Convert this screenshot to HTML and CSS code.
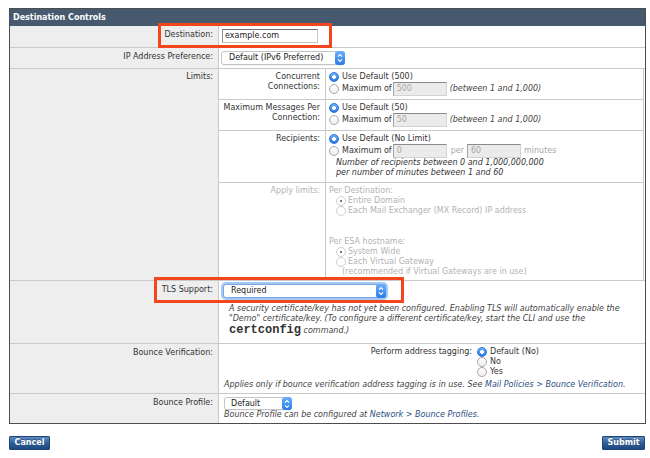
FILE: index.html
```html
<!DOCTYPE html>
<html>
<head>
<meta charset="utf-8">
<title>Destination Controls</title>
<link rel="stylesheet" href="styles.css">
</head>
<body>
<div class="page">
  <div class="panel">
    <div class="panel-head">Destination Controls</div>
    <div class="form">
      <div class="lbl">Destination:</div>
      <div class="val"><span class="textbox">example.com</span></div>

      <div class="lbl">IP Address Preference:</div>
      <div class="val">
        <div class="select sel-ip">Default (IPv6 Preferred)<span class="stepper"><svg width="6" height="10" viewBox="0 0 6 10"><path d="M1 3.6 3 1.6 5 3.6M1 6.4 3 8.4 5 6.4" fill="none" stroke="#fff" stroke-width="1.1"/></svg></span></div>
      </div>

      <div class="lbl top3">Limits:</div>
      <div class="val flush">
        <div class="limits">
          <div class="sublbl">Concurrent<br>Connections:</div>
          <div class="subval">
            <div class="opt"><span class="radio on"></span>Use Default (500)</div>
            <div class="opt tall"><span class="radio"></span>Maximum of<span class="num">500</span><em class="hint">(between 1 and 1,000)</em></div>
          </div>

          <div class="sublbl">Maximum Messages Per<br>Connection:</div>
          <div class="subval">
            <div class="opt"><span class="radio on"></span>Use Default (50)</div>
            <div class="opt tall"><span class="radio"></span>Maximum of<span class="num">50</span><em class="hint">(between 1 and 1,000)</em></div>
          </div>

          <div class="sublbl">Recipients:</div>
          <div class="subval">
            <div class="opt"><span class="radio on"></span>Use Default (No Limit)</div>
            <div class="opt tall"><span class="radio"></span>Maximum of<span class="num">0</span><span class="muted per">per</span><span class="num">60</span><span class="muted">minutes</span></div>
            <p class="rcpt-note">Number of recipients between 0 and 1,000,000,000<br>per number of minutes between 1 and 60</p>
          </div>

          <div class="sublbl last dis">Apply limits:</div>
          <div class="subval last dis">
            <div class="opt">Per Destination:</div>
            <div class="opt ind"><span class="radio dis-on"></span>Entire Domain</div>
            <div class="opt ind"><span class="radio dis-off"></span>Each Mail Exchanger (MX Record) IP address</div>
            <div class="opt group">Per ESA hostname:</div>
            <div class="opt ind"><span class="radio dis-on"></span>System Wide</div>
            <div class="opt ind"><span class="radio dis-off"></span>Each Virtual Gateway</div>
            <div class="opt ind2">(recommended if Virtual Gateways are in use)</div>
          </div>
        </div>
      </div>

      <div class="lbl">TLS Support:</div>
      <div class="val">
        <div class="select sel-tls">Required<span class="stepper"><svg width="6" height="10" viewBox="0 0 6 10"><path d="M1 3.6 3 1.6 5 3.6M1 6.4 3 8.4 5 6.4" fill="none" stroke="#fff" stroke-width="1.1"/></svg></span></div>
        <p class="tls-note">A security certificate/key has not yet been configured. Enabling TLS will automatically enable the<br>"Demo" certificate/key. (To configure a different certificate/key, start the CLI and use the<br><code class="cmd">certconfig</code> command.)</p>
      </div>

      <div class="lbl">Bounce Verification:</div>
      <div class="val">
        <div class="tagging">
          <div class="tag-lbl">Perform address tagging:</div>
          <div class="tag-opts">
            <div class="opt"><span class="radio on"></span>Default (No)</div>
            <div class="opt"><span class="radio"></span>No</div>
            <div class="opt"><span class="radio"></span>Yes</div>
          </div>
        </div>
        <p class="note bv-note">Applies only if bounce verification address tagging is in use. See <span class="link">Mail Policies &gt; Bounce Verification</span>.</p>
      </div>

      <div class="lbl last">Bounce Profile:</div>
      <div class="val last">
        <div class="select sel-bp">Default<span class="stepper"><svg width="6" height="10" viewBox="0 0 6 10"><path d="M1 3.6 3 1.6 5 3.6M1 6.4 3 8.4 5 6.4" fill="none" stroke="#fff" stroke-width="1.1"/></svg></span></div>
        <p class="note">Bounce Profile can be configured at <span class="link">Network &gt; Bounce Profiles</span>.</p>
      </div>
    </div>
  </div>

  <div class="actions">
    <button class="btn btn-cancel">Cancel</button>
    <button class="btn btn-submit">Submit</button>
  </div>

  <div class="hl hl-dest"></div>
  <div class="hl hl-tls"></div>
</div>
</body>
</html>
```

FILE: styles.css
```css
* { box-sizing: border-box; }
html, body { margin: 0; background: #fff; }
body {
  font-family: "DejaVu Sans", Verdana, sans-serif;
  font-size: 8px;
  line-height: 10px;
  color: #333;
}
p { margin: 0; }

.page {
  position: relative;
  width: 650px;
  height: 458px;
  padding: 8px 0 0 9px;
}

.panel {
  width: 637px;
  border: 1px solid #4d4d4d;
}
.panel-head {
  height: 17px;
  line-height: 17px;
  padding-left: 3px;
  background: #46596f;
  color: #fff;
  font-weight: bold;
}

.form {
  display: grid;
  grid-template-columns: 209px 1fr;
  grid-template-rows: 22px 21px 212px 63px 50px 29px;
}
.lbl {
  background: #eeeeee;
  border-right: 1px solid #c9c9c9;
  border-bottom: 1px solid #c9c9c9;
  text-align: right;
  padding: 4px 5px 0 0;
}
.lbl.top3 { padding-top: 3px; }
.val {
  border-bottom: 1px solid #c9c9c9;
  padding: 3px 3px 0 3px;
}
.val.flush { padding: 0; }
.lbl.last, .val.last { border-bottom: none; }

/* nested limits table */
.limits {
  display: grid;
  grid-template-columns: 107px 1fr;
  grid-template-rows: 31px 31px 52px 97px;
  height: 211px;
  margin-right: 1px;
  border-right: 1px solid #c9c9c9;
}
.sublbl {
  border-right: 1px solid #c9c9c9;
  border-bottom: 1px solid #c9c9c9;
  text-align: right;
  padding: 3px 5px 0 0;
}
.subval {
  border-bottom: 1px solid #c9c9c9;
  padding: 3px 0 0 3px;
}
.sublbl.last, .subval.last { border-bottom: none; }
.dis { color: #b3b3b3; }

.opt {
  display: flex;
  align-items: center;
  height: 10px;
  white-space: nowrap;
}
.opt.tall { height: 14px; }
.opt.ind { padding-left: 7px; }
.opt.ind .radio { margin-right: 2px; }
.opt.ind2 { padding-left: 13px; }
.opt.group { margin-top: 21px; }

.radio {
  flex: none;
  width: 10px;
  height: 10px;
  margin-right: 3px;
  border-radius: 50%;
  border: 1px solid #a8a8a8;
  background: linear-gradient(#ffffff, #ededed);
}
.radio.on {
  border-color: #2d74dc;
  background:
    radial-gradient(circle at 50% 50%, #fff 0 1.7px, rgba(255,255,255,0) 2.2px),
    linear-gradient(#6cb0fb, #2a78e6);
}
.radio.dis-off {
  border-color: #d0d0d0;
  background: #fff;
}
.radio.dis-on {
  border-color: #d0d0d0;
  background: radial-gradient(circle at 50% 50%, #7a7a7a 0 1px, rgba(255,255,255,0) 1.6px), #fff;
}

.num {
  flex: none;
  width: 54px;
  height: 14px;
  margin: 0 3px 0 1px;
  padding-left: 3px;
  line-height: 12px;
  border: 1px solid #d2d2d2;
  border-top-color: #8a8a8a;
  border-left-color: #a2a2a2;
  background: #ebebeb;
  color: #a8a8a8;
}
.hint { font-style: italic; color: #444; }
.muted { color: #a8a8a8; }
.muted.per { margin: 0 2px 0 1px; }

.rcpt-note {
  padding-left: 7px;
  font-style: italic;
  color: #333;
  white-space: nowrap;
}

/* inputs */
.textbox {
  display: block;
  width: 96px;
  height: 14px;
  padding-left: 2px;
  line-height: 12px;
  border: 1px solid #c6c6c6;
  border-top-color: #6b6b6b;
  border-left-color: #8f8f8f;
  color: #222;
}

.select {
  display: flex;
  justify-content: space-between;
  align-items: center;
  height: 14px;
  padding-left: 7px;
  border: 1px solid #c4c4c4;
  border-radius: 3px;
  background: #fff;
  color: #222;
  white-space: nowrap;
  box-shadow: 0 1px 0 rgba(0, 0, 0, 0.05);
}
.stepper {
  align-self: stretch;
  display: flex;
  align-items: center;
  justify-content: center;
  width: 10px;
  margin: -1px -1px -1px 0;
  border-radius: 3px;
  background: linear-gradient(#6cb0fb, #2c7be8);
}
.sel-ip { width: 124px; margin-left: -1px; }
.sel-tls {
  width: 163px;
  margin-left: 1px;
  border-color: #7aa6e2;
  box-shadow: 0 0 0 2px #a6c8f4;
}
.sel-bp { width: 68px; height: 13px; margin-left: 2px; padding-left: 6px; }

.tls-note {
  margin: 6px 0 0 7px;
  font-style: italic;
  color: #444;
  white-space: nowrap;
}
.cmd {
  font-family: "Liberation Mono", "Courier New", monospace;
  font-weight: bold;
  font-style: normal;
  font-size: 12px;
  line-height: 12px;
  color: #333;
}

.tagging {
  display: grid;
  grid-template-columns: 250px auto;
  column-gap: 5px;
}
.tag-lbl { text-align: right; }

.note {
  font-style: italic;
  color: #444;
  padding-left: 2px;
  white-space: nowrap;
}
.bv-note { margin-top: 3px; }
.link { color: #2b4f82; }

/* buttons */
.actions {
  display: flex;
  justify-content: space-between;
  width: 636px;
  margin-top: 12px;
}
.btn {
  height: 14px;
  padding: 0;
  border: 1px solid #1f4574;
  border-radius: 1px;
  background: linear-gradient(#5f8cc6, #2c5a93 55%, #1f4a80);
  color: #fff;
  font-family: "DejaVu Sans", Verdana, sans-serif;
  font-size: 8px;
  font-weight: bold;
  line-height: 12px;
  text-align: center;
  text-shadow: 0 -1px 0 rgba(0, 0, 0, 0.3);
}
.btn-cancel { width: 41px; }
.btn-submit { width: 43px; }

/* callout highlights over the form */
.hl {
  position: absolute;
  border: 3px solid #f4461c;
  pointer-events: none;
}
.hl-dest { left: 158px; top: 23px; width: 174px; height: 25px; }
.hl-tls { left: 154px; top: 277px; width: 250px; height: 26px; }
```
